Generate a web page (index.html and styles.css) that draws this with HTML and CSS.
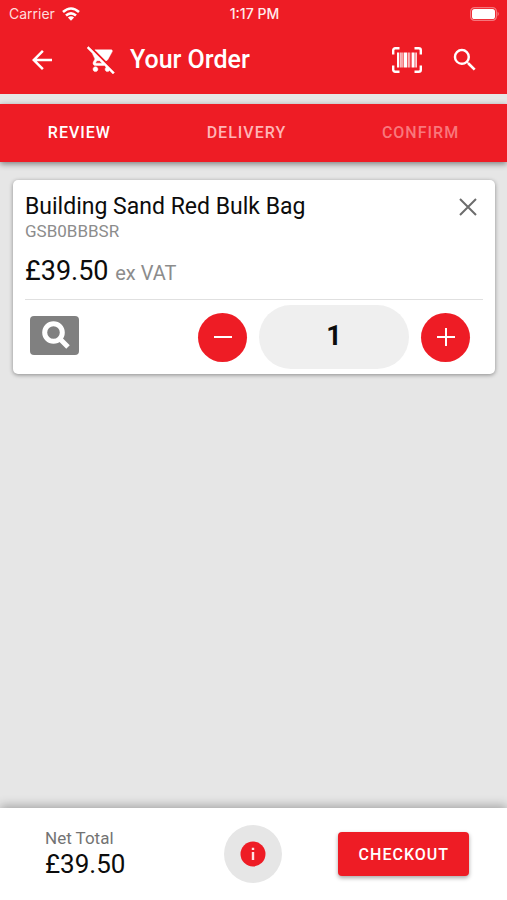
FILE: index.html
```html
<!DOCTYPE html>
<html lang="en">
<head>
<meta charset="utf-8">
<meta name="viewport" content="width=device-width, initial-scale=1">
<title>Your Order</title>
<link rel="stylesheet" href="styles.css">
</head>
<body>
<header class="top">
  <div class="status">
    <span class="carrier">Carrier
      <svg class="wifi" viewBox="0 0 18 14" aria-hidden="true"><g fill="none" stroke="currentColor" stroke-width="2.6"><path d="M1 5Q9-2 17 5"/><path d="M4 8.6Q9 4.200 14 8.600"/></g><path fill="currentColor" d="M5.900 10.400Q9 7.900 12.100 10.400L9 13.800z"/></svg>
    </span>
    <span class="time">1:17 PM</span>
    <svg class="battery" viewBox="0 0 30 14" aria-hidden="true"><rect x="0.600" y="0.600" width="25.800" height="12.800" rx="4" fill="none" stroke="#fff" stroke-opacity=".4" stroke-width="1.200"/><rect x="2" y="2" width="23" height="10" rx="2.600" fill="#fff"/><path d="M27.600 4.600q2.200 2.400 0 4.800z" fill="#fff" fill-opacity=".5"/></svg>
  </div>
  <div class="appbar">
    <button class="icon-btn" type="button" aria-label="Back"><svg viewBox="0 0 24 24"><path d="M20 11H7.830l5.590-5.590L12 4l-8 8 8 8 1.410-1.410L7.830 13H20z"/></svg></button>
    <button class="icon-btn cart" type="button" aria-label="Clear cart"><svg viewBox="0 0 24 24"><path d="M22.730 22.730L2.770 2.770 2 2l-.73-.73L0 2.540l4.390 4.390 2.210 4.660-1.350 2.450c-.16.28-.25.61-.25.96 0 1.100.9 2 2 2h7.460l1.380 1.380c-.5.36-.83.95-.83 1.620 0 1.100.89 2 1.990 2 .67 0 1.260-.33 1.620-.84L21.460 24l1.270-1.270zM7.420 15c-.14 0-.25-.11-.25-.25l.03-.12.9-1.630h2.360l2 2H7.420zm8.130-2c.75 0 1.410-.41 1.750-1.030l3.580-6.490c.08-.14.12-.31.12-.48 0-.55-.45-1-1-1H6.540l9.010 9zM7 18c-1.100 0-1.990.9-1.990 2S5.900 22 7 22s2-.9 2-2-.9-2-2-2z"/></svg></button>
    <h1>Your Order</h1>
    <button class="icon-btn scan" type="button" aria-label="Scan barcode"><svg viewBox="0 0 30 26"><path fill="none" stroke="currentColor" stroke-width="2.400" d="M1.200 7.500V3.200a2 2 0 0 1 2-2H7.500M22.500 1.200h4.300a2 2 0 0 1 2 2V7.500M28.800 18.500v4.300a2 2 0 0 1-2 2H22.500M7.500 24.800H3.200a2 2 0 0 1-2-2V18.500"/><path d="M5 5.500h2v15H5zM7.700 5.500h1v15h-1zM9.400 5.500h1.200v15H9.400zM11.600 5.500h3.400v15h-3.400zM15.700 5.500h1v15h-1zM19.600 5.500h3v15h-3zM17.400 5.500h.8v15h-.8zM23.400 5.500h1.400v15h-1.400z"/></svg></button>
    <button class="icon-btn" type="button" aria-label="Search"><svg viewBox="0 0 24 24"><path d="M15.500 14h-.79l-.28-.27A6.471 6.471 0 0 0 16 9.500 6.500 6.500 0 1 0 9.500 16c1.610 0 3.090-.59 4.230-1.570l.27.28v.79l5 4.990L20.490 19l-4.990-5zm-6 0C7.010 14 5 11.990 5 9.500S7.010 5 9.500 5 14 7.010 14 9.500 11.990 14 9.500 14z"/></svg></button>
  </div>
</header>

<nav class="steps" aria-label="Order steps">
  <a href="#review" aria-current="step">REVIEW</a>
  <a href="#delivery" class="next">DELIVERY</a>
  <a href="#confirm" class="later">CONFIRM</a>
</nav>

<main id="review">
  <article class="card">
    <div class="card-head">
      <h2>Building Sand Red Bulk Bag</h2>
      <button class="remove" type="button" aria-label="Remove item"><svg viewBox="0 0 18 18"><path d="M1 1l16 16M17 1L1 17"/></svg></button>
    </div>
    <p class="sku">GSB0BBBSR</p>
    <p class="price">£39.50 <small>ex VAT</small></p>
    <div class="actions">
      <button class="view" type="button" aria-label="View product"><svg viewBox="0 0 28 28"><circle cx="11.500" cy="11.500" r="8.800"/><path d="M17.500 17.500l8.500 8.500"/></svg></button>
      <button class="round" type="button" aria-label="Decrease quantity"><svg viewBox="0 0 18 18"><path d="M0 9h18"/></svg></button>
      <input class="qty" type="text" inputmode="numeric" value="1" aria-label="Quantity">
      <button class="round" type="button" aria-label="Increase quantity"><svg viewBox="0 0 18 18"><path d="M0 9h18M9 0v18"/></svg></button>
    </div>
  </article>
</main>

<footer class="summary">
  <div class="total"><span>Net Total</span><strong>£39.50</strong></div>
  <button class="info" type="button" aria-label="Order details"><svg viewBox="0 0 26 26"><circle cx="13" cy="13" r="12.500" fill="#ee1c25"/><path d="M11.800 6.800h2.400v2.300h-2.400zM11.800 11h2.400v8h-2.400z" fill="#ffe3e4"/></svg></button>
  <button class="checkout" type="button">CHECKOUT</button>
</footer>
</body>
</html>
```

FILE: styles.css
```css
* {
  box-sizing: border-box;
}

body {
  margin: 0;
  min-height: 100vh;
  display: flex;
  flex-direction: column;
  background: #e6e6e6;
  color: #0c0c0c;
  font-family: Roboto, "Liberation Sans", sans-serif;
}

h1, h2, p {
  margin: 0;
}

button {
  display: flex;
  align-items: center;
  justify-content: center;
  padding: 0;
  border: 0;
  background: none;
  color: inherit;
  font: inherit;
  cursor: pointer;
}

.top {
  background: #ee1c25;
  color: #fff;
}

.status {
  display: grid;
  grid-template-columns: 1fr auto 1fr;
  align-items: center;
  height: 27px;
  padding: 0 7px 0 9px;
  font: 500 14px/20px Inter, "Liberation Sans", sans-serif;
}

.time {
  color: #ffeced;
}

.carrier {
  display: flex;
  align-items: center;
  gap: 7px;
  font-weight: 400;
  color: #ffdcdd;
}

.wifi {
  width: 18px;
  height: 14px;
  color: #fff;
}

.battery {
  width: 30px;
  height: 14px;
  justify-self: end;
}

.appbar {
  display: flex;
  align-items: center;
  height: 67px;
  padding: 0 27px 2px;
}

.icon-btn svg {
  display: block;
  width: 30px;
  height: 30px;
  fill: currentColor;
}

.icon-btn.cart {
  margin: 0 14px 0 30px;
}

.icon-btn.cart svg {
  width: 29px;
  height: 29px;
  stroke: currentColor;
  stroke-width: 0.4;
}

.icon-btn.scan {
  margin: 0 28px 0 auto;
}

.icon-btn.scan svg {
  height: 26px;
}

h1 {
  font-size: 25px;
  line-height: 32px;
  font-weight: 500;
}

.steps {
  display: flex;
  justify-content: space-around;
  align-items: center;
  height: 58px;
  margin-top: 10px;
  background: #ee1c25;
  box-shadow: 0 2px 6px rgba(0, 0, 0, .45);
}

.steps a {
  color: #fff;
  font-size: 16px;
  line-height: 20px;
  font-weight: 500;
  letter-spacing: 1px;
  text-decoration: none;
}

.steps .next {
  color: #ffb4b6;
}

.steps .later {
  color: #f9777c;
}

main {
  flex: 1;
  padding: 18px 12px 18px 13px;
}

.card {
  padding: 11px 12px 0;
  border-radius: 5px;
  background: #fff;
  box-shadow: 0 1px 4px rgba(0, 0, 0, .4);
}

.card-head {
  display: flex;
  justify-content: space-between;
  align-items: center;
}

h2 {
  font-size: 23px;
  line-height: 32px;
  font-weight: 400;
}

.remove {
  width: 30px;
  height: 32px;
}

.remove svg {
  width: 18px;
  height: 18px;
  fill: none;
  stroke: #6c6c6c;
  stroke-width: 2;
}

.sku {
  color: #8c8c8c;
  font-size: 17px;
  line-height: 16px;
}

.price {
  padding: 16px 0 10px;
  font-size: 27px;
  line-height: 32px;
}

.price small {
  color: #8c8c8c;
  font-size: 20px;
}

.actions {
  display: flex;
  align-items: center;
  gap: 12px;
  padding: 5px 13px 5px 5px;
  border-top: 1px solid #e0e0e0;
}

.view {
  width: 49px;
  height: 39px;
  margin: 0 auto 4px 0;
  border-radius: 4px;
  background: #808080;
}

.view svg {
  width: 28px;
  height: 28px;
  margin-left: 3px;
  fill: none;
  stroke: #fff;
  stroke-width: 5;
}

.round {
  width: 49px;
  height: 49px;
  border-radius: 50%;
  background: #ee1c25;
}

.round svg {
  width: 18px;
  height: 18px;
  stroke: #fff;
  stroke-width: 2;
}

.qty {
  width: 150px;
  height: 64px;
  padding: 0 0 3px;
  border: 0;
  border-radius: 32px;
  background: #efefef;
  color: #0c0c0c;
  font: 700 27px/32px Roboto, "Liberation Sans", sans-serif;
  text-align: center;
}

.summary {
  display: grid;
  grid-template-columns: repeat(3, 1fr);
  align-items: center;
  justify-items: center;
  height: 92px;
  padding: 0 28px;
  background: #fff;
  box-shadow: 0 -2px 10px rgba(0, 0, 0, .3);
}

.total {
  justify-self: start;
  display: flex;
  flex-direction: column;
  padding-left: 17px;
}

.total span {
  color: #737373;
  font-size: 17px;
  line-height: 20px;
}

.total strong {
  font-size: 26px;
  line-height: 32px;
  font-weight: 400;
}

.info {
  width: 58px;
  height: 58px;
  border-radius: 50%;
  background: #e6e6e6;
}

.info svg {
  width: 26px;
  height: 26px;
}

.checkout {
  width: 131px;
  height: 44px;
  border-radius: 4px;
  background: #ee1c25;
  color: #fff;
  font-size: 16px;
  font-weight: 500;
  letter-spacing: 1px;
  box-shadow: 0 2px 4px rgba(0, 0, 0, .35);
}
```
